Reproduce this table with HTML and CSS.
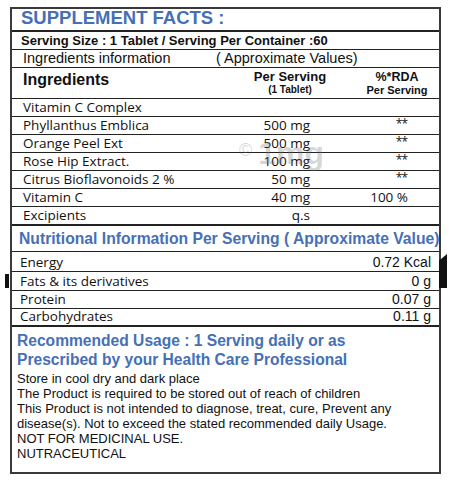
FILE: index.html
```html
<!DOCTYPE html>
<html lang="en">
<head>
<meta charset="utf-8">
<title>Supplement Facts</title>
<link rel="stylesheet" href="styles.css">
</head>
<body>
<div class="sheet">
  <div class="title">SUPPLEMENT FACTS :</div>
  <div class="serving">Serving Size : 1 Tablet / Serving Per Container :60</div>
  <div class="info"><span class="info-label">Ingredients information</span><span>( Approximate Values)</span></div>
  <div class="ing-head">
    <div class="ing-head-label">Ingredients</div>
    <div class="ing-head-col">
      <div class="ph1">Per Serving</div>
      <div class="ph2">(1 Tablet)</div>
    </div>
    <div class="ing-head-col">
      <div class="ph1 rda">%*RDA</div>
      <div class="ph3">Per Serving</div>
    </div>
  </div>
  <div class="ing-row"><span>Vitamin C Complex</span><span class="val"></span><span class="val"></span></div>
  <div class="ing-row"><span>Phyllanthus Emblica</span><span class="val">500 mg</span><span class="val star">**</span></div>
  <div class="ing-row"><span>Orange Peel Ext</span><span class="val">500 mg</span><span class="val star">**</span></div>
  <div class="ing-row"><span>Rose Hip Extract.</span><span class="val">100 mg</span><span class="val star">**</span></div>
  <div class="ing-row"><span>Citrus Bioflavonoids 2 %</span><span class="val">50 mg</span><span class="val star">**</span></div>
  <div class="ing-row"><span>Vitamin C</span><span class="val">40 mg</span><span class="val">100 %</span></div>
  <div class="ing-row ing-last"><span>Excipients</span><span class="val">q.s</span><span class="val"></span></div>
  <div class="nut-head">Nutritional Information Per Serving ( Approximate Value)</div>
  <div class="nut-row nut-r1"><span>Energy</span><span class="nut-val">0.72 Kcal</span></div>
  <div class="nut-row nut-r2"><span>Fats &amp; its derivatives</span><span class="nut-val">0 g</span></div>
  <div class="nut-row nut-r3"><span>Protein</span><span class="nut-val">0.07 g</span></div>
  <div class="nut-row nut-r4"><span>Carbohydrates</span><span class="nut-val">0.11 g</span></div>
  <div class="usage">
    <div class="usage-title">Recommended Usage : 1 Serving daily or as<br>Prescribed by your Health Care Professional</div>
    <p class="usage-text">Store in cool dry and dark place<br>The Product is required to be stored out of reach of children<br>This Product is not intended to diagnose, treat, cure, Prevent any<br>disease(s). Not to exceed the stated recommended daily Usage.<br>NOT FOR MEDICINAL USE.<br>NUTRACEUTICAL</p>
  </div>
  <div class="watermark"><span class="wm-c">©</span><span class="wm-t">1mg</span></div>
  <div class="tab-left"></div>
  <div class="tab-right"></div>
</div>
</body>
</html>
```

FILE: styles.css
```css
* { box-sizing: border-box; }
html, body { margin: 0; padding: 0; background: #fff; }
body { font-family: "Liberation Sans", Arial, sans-serif; color: #111; }

.sheet {
  position: relative;
  margin: 7px 0 0 10px;
  width: 431px;
  border: 2px solid #3a3a3a;
}

.title {
  height: 23px;
  border-bottom: 2px solid #222;
  padding-left: 9px;
  font-weight: bold;
  font-size: 18.5px;
  line-height: 18px;
  color: #4670b5;
  white-space: nowrap;
}

.serving {
  height: 18px;
  border-bottom: 1px solid #222;
  padding-left: 9px;
  font-weight: bold;
  font-size: 13px;
  line-height: 17px;
  white-space: nowrap;
}

.info {
  height: 18px;
  border-bottom: 1px solid #222;
  padding-left: 11px;
  font-size: 14.5px;
  line-height: 17px;
  white-space: nowrap;
  display: flex;
}
.info-label { width: 193px; }

.ing-head {
  height: 31px;
  border-bottom: 1px solid #222;
  padding: 2px 2px 0 11px;
  display: grid;
  grid-template-columns: 1fr 80px 80px;
  column-gap: 27px;
  font-weight: bold;
  white-space: nowrap;
}
.ing-head-label { font-size: 16px; line-height: 18px; padding-top: 1px; }
.ing-head-col { text-align: center; }
.ph1 { font-size: 13px; line-height: 14px; }
.ph1.rda { font-size: 12.5px; }
.ph2 { font-size: 10px; line-height: 12px; }
.ph3 { font-size: 11px; line-height: 13px; }

.ing-row {
  height: 18px;
  border-bottom: 1px solid #222;
  padding: 0 31px 0 11px;
  display: grid;
  grid-template-columns: 1fr 80px 98px;
  font-family: "Open Sans", "Liberation Sans", sans-serif;
  font-size: 13.5px;
  line-height: 17px;
  white-space: nowrap;
}
.ing-row .val { text-align: right; }
.ing-row .star { font-size: 12px; letter-spacing: -1px; padding-right: 1px; line-height: 13px; }
.ing-last { height: 19px; border-bottom-width: 2px; }

.nut-head {
  height: 26px;
  border-bottom: 1px solid #222;
  padding-left: 7px;
  font-weight: bold;
  font-size: 15.7px;
  line-height: 25px;
  color: #4670b5;
  white-space: nowrap;
  overflow: hidden;
}

.nut-row {
  height: 18px;
  border-bottom: 1px solid #222;
  padding: 0 8px 0 8px;
  display: flex;
  justify-content: space-between;
  align-items: flex-end;
  white-space: nowrap;
}
.nut-row > span:first-child {
  font-family: "Open Sans", "Liberation Sans", sans-serif;
  font-size: 13.5px;
  line-height: 17px;
}
.nut-val { font-size: 14px; line-height: 17px; }
.nut-r1 { height: 20px; }
.nut-r2 { height: 19px; }
.nut-r4 { border-bottom-width: 2px; }

.usage {
  height: 145px;
  padding: 5px 0 0 5px;
}
.usage-title {
  font-weight: bold;
  font-size: 15.6px;
  line-height: 18.5px;
  color: #4670b5;
  white-space: nowrap;
}
.usage-text {
  margin: 2px 0 0;
  font-size: 13px;
  line-height: 15px;
  white-space: nowrap;
}

.watermark {
  position: absolute;
  left: 227px;
  top: 124px;
  color: rgba(110, 110, 110, 0.28);
  white-space: nowrap;
  pointer-events: none;
}
.wm-c { font-size: 18px; vertical-align: 8px; margin-right: 6px; }
.wm-t { font-weight: bold; font-size: 32px; line-height: 40px; }

.tab-left {
  position: absolute;
  left: -7px;
  top: 265px;
  width: 4px;
  height: 14px;
  background: #111;
}
.tab-right {
  position: absolute;
  left: 427px;
  top: 245px;
  width: 8px;
  height: 34px;
  background: #111;
  clip-path: polygon(0 20%, 100% 0, 100% 100%, 0 100%);
}
```
